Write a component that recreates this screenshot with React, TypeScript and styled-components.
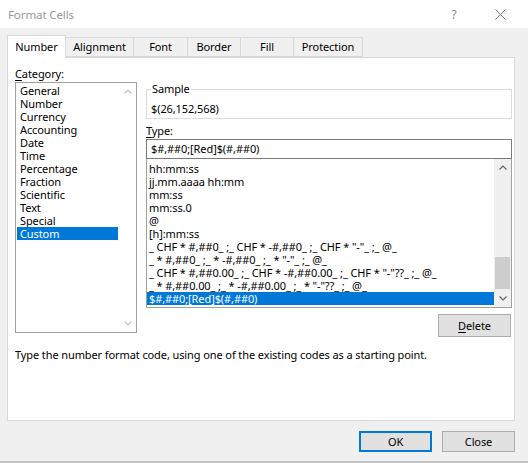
import React from 'react';
import styled, { createGlobalStyle } from 'styled-components';

const Global = createGlobalStyle`
  html, body { margin: 0; padding: 0; background: #f0f0f0; }
  body {
    font-family: "Noto Sans", "Segoe UI", "Liberation Sans", sans-serif;
    font-size: 11px;
    letter-spacing: -0.1px;
    color: #000;
  }
  * { box-sizing: border-box; }
`;

const Dialog = styled.div`
  width: 528px;
  height: 463px;
  display: flex;
  flex-direction: column;
  background: #f0f0f0;
  overflow: hidden;
`;

const TitleBar = styled.div`
  height: 28px;
  flex: none;
  background: #fff;
  display: flex;
  align-items: center;
  padding-left: 8px;
  padding-right: 5px;
  color: #999;
`;

const Title = styled.span`
  flex: 1;
  font-size: 11.5px;
`;

const TitleButton = styled.div`
  width: 46px;
  height: 28px;
  display: flex;
  align-items: center;
  justify-content: center;
  color: #8a8a8a;
  font-size: 12px;
`;

const Body = styled.div`
  padding: 7px 13px 0 7px;
  display: flex;
  flex-direction: column;
`;

const TabRow = styled.div`
  display: flex;
  align-items: flex-end;
  height: 22px;
  position: relative;
  z-index: 1;
`;

const Tab = styled.div<{ $w: number; $active?: boolean }>`
  width: ${p => p.$w}px;
  height: ${p => (p.$active ? 23 : 20)}px;
  margin-bottom: ${p => (p.$active ? -1 : 0)}px;
  margin-left: -1px;
  &:first-child { margin-left: 0; }
  border: 1px solid #d9d9d9;
  border-bottom: ${p => (p.$active ? 'none' : '1px solid #d9d9d9')};
  background: ${p => (p.$active ? '#fff' : '#f0f0f0')};
  display: flex;
  align-items: ${p => (p.$active ? 'flex-start' : 'center')};
  padding-top: ${p => (p.$active ? 4 : 0)}px;
  justify-content: center;
  line-height: 14px;
  position: relative;
  z-index: ${p => (p.$active ? 2 : 1)};
`;

const Panel = styled.div`
  height: 364px;
  background: #fff;
  border: 1px solid #d9d9d9;
  padding: 9px 0 0 7px;
  display: flex;
  flex-direction: column;
`;

const TopRow = styled.div`
  display: flex;
  align-items: flex-start;
`;

const LeftCol = styled.div`
  width: 122px;
  display: flex;
  flex-direction: column;
`;

const RightCol = styled.div`
  width: 366px;
  margin-left: 9px;
  padding-top: 15px;
  display: flex;
  flex-direction: column;
`;

const Label = styled.div`
  height: 15px;
  line-height: 13px;
`;

const Key = styled.span`
  text-decoration: underline;
  text-underline-offset: 2px;
`;

const CategoryBox = styled.div`
  height: 251px;
  border: 1px solid #a0a0a0;
  display: flex;
`;

const Items = styled.div<{ $pad: string }>`
  flex: 1;
  padding: ${p => p.$pad};
  overflow: hidden;
  display: flex;
  flex-direction: column;
`;

const Item = styled.div<{ $selected?: boolean; $pl: number }>`
  height: 13px;
  line-height: 13px;
  flex: none;
  padding-left: ${p => p.$pl}px;
  white-space: pre;
  background: ${p => (p.$selected ? '#0078d7' : 'transparent')};
  color: ${p => (p.$selected ? '#fff' : '#000')};
`;

const ScrollBar = styled.div<{ $bg: string }>`
  width: 17px;
  flex: none;
  background: ${p => p.$bg};
  display: flex;
  flex-direction: column;
`;

const ArrowButton = styled.div`
  height: 17px;
  flex: none;
  display: flex;
  align-items: center;
  justify-content: center;
`;

const Track = styled.div`
  flex: 1;
  display: flex;
  flex-direction: column;
  justify-content: flex-end;
  align-items: center;
`;

const Thumb = styled.div`
  width: 15px;
  height: 32px;
  background: #cdcdcd;
  margin-bottom: 1px;
`;

const Group = styled.fieldset`
  margin: 0;
  padding: 6px 5px 3px 4px;
  border: 1px solid #dcdcdc;
  min-width: 0;
`;

const Legend = styled.legend`
  padding: 0 1px;
  line-height: 14px;
  margin-left: 0;
`;

const SampleValue = styled.div`
  line-height: 13px;
  height: 13px;
`;

const TypeLabel = styled(Label)`
  margin-top: 5px;
  height: 13px;
`;

const TypeInput = styled.div`
  margin-top: 2px;
  height: 20px;
  border: 1px solid #7a7a7a;
  padding-left: 4px;
  line-height: 18px;
  white-space: pre;
`;

const TypeList = styled.div`
  height: 149px;
  border: 1px solid #a0a0a0;
  border-top: none;
  display: flex;
`;

const Button = styled.button<{ $w: number; $h: number; $default?: boolean }>`
  width: ${p => p.$w}px;
  height: ${p => p.$h}px;
  flex: none;
  font-family: inherit;
  font-size: 11px;
  letter-spacing: inherit;
  color: #000;
  background: #e1e1e1;
  border: ${p => (p.$default ? '2px solid #0078d7' : '1px solid #adadad')};
  padding: 0;
  margin: 0;
`;

const DeleteRow = styled.div`
  display: flex;
  justify-content: flex-end;
  margin-top: 6px;
  padding-right: 1px;
`;

const Description = styled.div`
  margin-top: 11px;
  line-height: 13px;
`;

const ButtonRow = styled.div`
  display: flex;
  justify-content: flex-end;
  gap: 10px;
  margin-top: 10px;
  margin-right: -13px;
  padding-right: 13px;
`;

const BottomEdge = styled.div`
  margin-top: auto;
  height: 2px;
  flex: none;
  background: #c4c4c4;
`;

const Chevron = ({ up, color }: { up?: boolean; color: string }) => (
  <svg width="8" height="5" viewBox="0 0 8 5">
    <polyline
      points={up ? '0.5,4.5 4,1 7.5,4.5' : '0.5,0.5 4,4 7.5,0.5'}
      fill="none"
      stroke={color}
      strokeWidth="1.1"
    />
  </svg>
);

const tabs: [string, number][] = [
  ['Number', 59],
  ['Alignment', 69],
  ['Font', 55],
  ['Border', 54],
  ['Fill', 54],
  ['Protection', 70],
];

const categories = [
  'General', 'Number', 'Currency', 'Accounting', 'Date', 'Time',
  'Percentage', 'Fraction', 'Scientific', 'Text', 'Special', 'Custom',
];

const formats = [
  'hh:mm:ss',
  'jj.mm.aaaa hh:mm',
  'mm:ss',
  'mm:ss.0',
  '@',
  '[h]:mm:ss',
  '_ CHF * #,##0_ ;_ CHF * -#,##0_ ;_ CHF * "-"_ ;_ @_',
  '_ * #,##0_ ;_ * -#,##0_ ;_ * "-"_ ;_ @_',
  '_ CHF * #,##0.00_ ;_ CHF * -#,##0.00_ ;_ CHF * "-"??_ ;_ @_',
  '_ * #,##0.00_ ;_ * -#,##0.00_ ;_ * "-"??_ ;_ @_',
  '$#,##0;[Red]$(#,##0)',
];

export default function App() {
  return (
    <>
      <Global />
      <Dialog>
        <TitleBar>
          <Title>Format Cells</Title>
          <TitleButton>?</TitleButton>
          <TitleButton>
            <svg width="11" height="11" viewBox="0 0 11 11">
              <path d="M0.5 0.5 L10.5 10.5 M10.5 0.5 L0.5 10.5" stroke="#777" strokeWidth="1" />
            </svg>
          </TitleButton>
        </TitleBar>
        <Body>
          <TabRow>
            {tabs.map(([t, w], i) => (
              <Tab key={t} $w={w} $active={i === 0}>{t}</Tab>
            ))}
          </TabRow>
          <Panel>
            <TopRow>
              <LeftCol>
                <Label><Key>C</Key>ategory:</Label>
                <CategoryBox>
                  <Items $pad="1px">
                    {categories.map(c => (
                      <Item key={c} $pl={3} $selected={c === 'Custom'}>{c}</Item>
                    ))}
                  </Items>
                  <ScrollBar $bg="#fff">
                    <ArrowButton><Chevron up color="#c2c2c2" /></ArrowButton>
                    <Track />
                    <ArrowButton><Chevron color="#c2c2c2" /></ArrowButton>
                  </ScrollBar>
                </CategoryBox>
              </LeftCol>
              <RightCol>
                <Group>
                  <Legend>Sample</Legend>
                  <SampleValue>$(26,152,568)</SampleValue>
                </Group>
                <TypeLabel><Key>T</Key>ype:</TypeLabel>
                <TypeInput>$#,##0;[Red]$(#,##0)</TypeInput>
                <TypeList>
                  <Items $pad="3px 0 0 0">
                    {formats.map((f, i) => (
                      <Item key={f} $pl={2} $selected={i === formats.length - 1}>{f}</Item>
                    ))}
                  </Items>
                  <ScrollBar $bg="#f0f0f0">
                    <ArrowButton><Chevron up color="#606060" /></ArrowButton>
                    <Track><Thumb /></Track>
                    <ArrowButton><Chevron color="#606060" /></ArrowButton>
                  </ScrollBar>
                </TypeList>
                <DeleteRow>
                  <Button $w={73} $h={23}><Key>D</Key>elete</Button>
                </DeleteRow>
              </RightCol>
            </TopRow>
            <Description>
              Type the number format code, using one of the existing codes as a starting point.
            </Description>
          </Panel>
          <ButtonRow>
            <Button $w={73} $h={21} $default>OK</Button>
            <Button $w={73} $h={21}>Close</Button>
          </ButtonRow>
        </Body>
        <BottomEdge />
      </Dialog>
    </>
  );
}
